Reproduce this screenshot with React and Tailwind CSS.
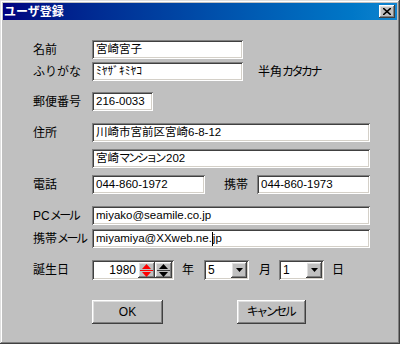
import React from 'react'

const sunken =
  'bg-white shadow-[inset_1px_1px_0_#808080,inset_-1px_-1px_0_#ffffff,inset_2px_2px_0_#404040,inset_-2px_-2px_0_#d4d0c8]'
const raised =
  'bg-[#c0c0c0] shadow-[inset_-1px_-1px_0_#404040,inset_1px_1px_0_#ffffff,inset_-2px_-2px_0_#808080,inset_2px_2px_0_#dfdfdf]'

// narrow kana, like the proportional kana of the old UI font
const Kana = ({ children }) => <span className="tracking-[-2.5px] mr-[2px]">{children}</span>

const Field = ({ value, className = '', children }) => (
  <div className={`${sunken} h-[19px] flex items-center pl-[4px] pt-[1px] text-[11.5px] text-black whitespace-nowrap overflow-hidden ${className}`}>
    {children || value}
  </div>
)

const Label = ({ children }) => <div className="w-[59px] text-[12px] text-black whitespace-nowrap">{children}</div>

const Tri = ({ dir, color }) => (
  <svg width="9" height="5" viewBox="0 0 9 5">
    {dir === 'up' ? <polygon points="4.5,0 9,5 0,5" fill={color} /> : <polygon points="0,0 9,0 4.5,5" fill={color} />}
  </svg>
)

const Spin = ({ color }) => (
  <div className={`${raised} w-[17px] h-full flex flex-col items-center justify-center gap-[1px]`}>
    <Tri dir="up" color={color} />
    <div className={`w-[13px] h-[1px] ${color === '#ff0000' ? 'bg-[#ff0000]' : 'bg-[#404040]'}`} />
    <Tri dir="down" color={color} />
  </div>
)

const Combo = ({ value }) => (
  <div className={`${sunken} w-[45px] h-[20px] flex items-stretch p-[2px]`}>
    <div className="flex-1 pl-[2px] text-[12px] leading-[16px]">{value}</div>
    <div className={`${raised} w-[16px] flex items-center justify-center`}>
      <svg width="7" height="4" viewBox="0 0 7 4">
        <polygon points="0,0 7,0 3.5,4" fill="#000" />
      </svg>
    </div>
  </div>
)

const Button = ({ children, className = '' }) => (
  <div className={`${raised} h-[24px] flex items-center justify-center text-[12px] ${className}`}>{children}</div>
)

export default function App() {
  return (
    <div
      className="w-[400px] h-[344px] bg-[#c0c0c0] p-[3px] flex flex-col shadow-[inset_-1px_-1px_0_#404040,inset_1px_1px_0_#dfdfdf,inset_-2px_-2px_0_#808080,inset_2px_2px_0_#ffffff]"
      style={{ fontFamily: '"Liberation Sans", "Noto Sans CJK JP", sans-serif' }}
    >
      <div className="h-[17px] bg-gradient-to-r from-[#000080] to-[#1084d0] flex items-center justify-between pl-[1px] pr-[2px]">
        <span className="text-white font-bold text-[12px] leading-none">ユーザ登録</span>
        <div className={`${raised} w-[16px] h-[13px] flex items-center justify-center`}>
          <svg width="8" height="7" viewBox="0 0 8 7">
            <path d="M0 0 L8 7 M8 0 L0 7" stroke="#000" strokeWidth="1.6" />
          </svg>
        </div>
      </div>

      <div className="flex flex-col pl-[30px] pt-[20px]">
        <div className="flex items-center">
          <Label>名前</Label>
          <Field value="宮崎宮子" className="w-[151px]" />
        </div>
        <div className="flex items-center mt-[3px]">
          <Label>ふりがな</Label>
          <Field value="ﾐﾔｻﾞｷﾐﾔｺ" className="w-[151px]" />
          <span className="ml-[15px] text-[12px]">
            半角<Kana>カタカナ</Kana>
          </span>
        </div>
        <div className="flex items-center mt-[11px]">
          <Label>郵便番号</Label>
          <Field value="216-0033" className="w-[61px]" />
        </div>
        <div className="flex items-center mt-[12px]">
          <Label>住所</Label>
          <Field value="川崎市宮前区宮崎6-8-12" className="w-[278px]" />
        </div>
        <div className="flex items-center mt-[7px]">
          <Label />
          <Field className="w-[278px]">
            宮崎<Kana>マンション</Kana>202
          </Field>
        </div>
        <div className="flex items-center mt-[7px]">
          <Label>電話</Label>
          <Field value="044-860-1972" className="w-[113px]" />
          <span className="ml-[19px] w-[33px] text-[12px]">携帯</span>
          <Field value="044-860-1973" className="w-[113px]" />
        </div>
        <div className="flex items-center mt-[12px]">
          <Label>
            PC<Kana>メール</Kana>
          </Label>
          <Field value="miyako@seamile.co.jp" className="w-[278px]" />
        </div>
        <div className="flex items-center mt-[4px]">
          <Label>
            携帯<Kana>メール</Kana>
          </Label>
          <Field className="w-[278px]">
            miyamiya@XXweb.ne.<span className="inline-block w-[1px] h-[14px] bg-black" />jp
          </Field>
        </div>
        <div className="flex items-center mt-[12px]">
          <Label>誕生日</Label>
          <div className={`${sunken} w-[82px] h-[20px] flex items-stretch p-[2px]`}>
            <div className="flex-1 text-right pr-[2px] text-[12px] leading-[16px]">1980</div>
            <Spin color="#ff0000" />
            <Spin color="#000000" />
          </div>
          <span className="ml-[8px] text-[12px]">年</span>
          <div className="ml-[10px]">
            <Combo value="5" />
          </div>
          <span className="ml-[10px] text-[12px]">月</span>
          <div className="ml-[8px]">
            <Combo value="1" />
          </div>
          <span className="ml-[8px] text-[12px]">日</span>
        </div>
        <div className="flex items-center mt-[20px]">
          <div className="w-[59px]" />
          <Button className="w-[71px]">OK</Button>
          <Button className="w-[69px] ml-[74px]">
            <Kana>キャンセル</Kana>
          </Button>
        </div>
      </div>
    </div>
  )
}
